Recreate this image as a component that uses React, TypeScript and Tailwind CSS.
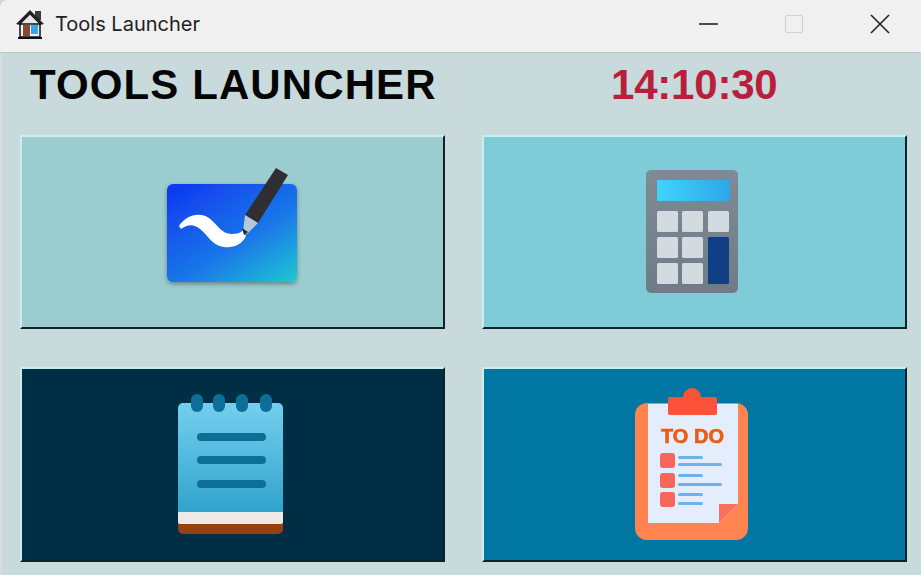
import React from "react";

function HomeIcon() {
  return (
    <svg width="30" height="29" viewBox="0 3 30 29" className="blur-[0.3px]">
      <path d="M20 4h6v9h-6z" fill="#3a3a3a" />
      <path d="M15 3 L1 17 L5 18 L15 8 L25 18 L29 17 Z" fill="#222" />
      <path d="M15 8 L5 18 L25 18 Z" fill="#e8e6ea" />
      <path d="M5 17 h20 v13 h-20 z" fill="#eef0f4" stroke="#111" strokeWidth="1.5" />
      <path d="M8 18h7v11H8z" fill="#8a4a36" />
      <path d="M16 18h7v9h-7z" fill="#35a4f0" />
      <path d="M3 30h24v2H3z" fill="#111" />
    </svg>
  );
}

function BoardIcon() {
  return (
    <svg width="143" height="136" viewBox="0 0 143 136" className="blur-[0.7px]">
      <defs>
        <linearGradient id="wb" x1="0.1" y1="0" x2="0.95" y2="1">
          <stop offset="0" stopColor="#0f3af0" />
          <stop offset="0.6" stopColor="#1a7ae8" />
          <stop offset="1" stopColor="#20c4d4" />
        </linearGradient>
        <filter id="sh" x="-10%" y="-10%" width="120%" height="125%">
          <feDropShadow dx="0" dy="2" stdDeviation="2" floodColor="#000" floodOpacity="0.35" />
        </filter>
      </defs>
      <rect x="6" y="20" width="130" height="98" rx="6" fill="url(#wb)" filter="url(#sh)" />
      <path
        d="M18 62 C 24 52, 38 47, 48 54 C 57 61, 61 70, 70 70 C 76 70, 80 69, 82 66 L 85 72 C 81 81, 72 84, 63 83 C 50 81, 47 71, 39 65 C 32 59, 26 61, 20 65 Z"
        fill="#fff"
      />
      <path d="M84 51 L115 4 L127 11 L97 59 Z" fill="#2f2f33" />
      <path d="M84 51 L97 59 L86 70 L82 68 Z" fill="#b8c8d4" />
      <path d="M81 64 L87 68 L83 71 Z" fill="#1d2a44" />
    </svg>
  );
}

function CalcIcon() {
  const keys = [
    [11, 41], [36, 41], [62, 41],
    [11, 67], [36, 67],
    [11, 93], [36, 93],
  ];
  return (
    <svg width="97" height="124" viewBox="0 0 97 124" className="blur-[0.7px]">
      <defs>
        <linearGradient id="cb" x1="0" y1="0" x2="0" y2="1">
          <stop offset="0" stopColor="#7f8a94" />
          <stop offset="1" stopColor="#6f7c88" />
        </linearGradient>
        <linearGradient id="cd" x1="0" y1="0" x2="1" y2="0">
          <stop offset="0" stopColor="#3fd4fb" />
          <stop offset="1" stopColor="#2ea6e6" />
        </linearGradient>
      </defs>
      <rect x="0" y="0" width="92" height="123" rx="5" fill="url(#cb)" />
      <rect x="11" y="10" width="73" height="21" fill="url(#cd)" />
      {keys.map(([x, y], i) => (
        <rect key={i} x={x} y={y} width="21" height="21" rx="1.5" fill="#d3dbe1" />
      ))}
      <rect x="62" y="67" width="21" height="47" rx="1.5" fill="#113f86" />
    </svg>
  );
}

function NoteIcon() {
  return (
    <svg width="109" height="141" viewBox="0 0 109 141" className="blur-[0.7px]">
      <defs>
        <linearGradient id="np" x1="0" y1="0" x2="0" y2="1">
          <stop offset="0" stopColor="#74cfee" />
          <stop offset="1" stopColor="#30a4cc" />
        </linearGradient>
      </defs>
      <path d="M0 124h105v11a5 5 0 0 1-5 5H5a5 5 0 0 1-5-5z" fill="#92410f" />
      <rect x="0" y="114" width="105" height="16" rx="2" fill="#ece9e6" />
      <path d="M5 9h95a5 5 0 0 1 5 5v104H0V14a5 5 0 0 1 5-5z" fill="url(#np)" />
      {[19, 41, 64, 88].map((x) => (
        <rect key={x} x={x - 6} y="0" width="12" height="18" rx="6" fill="#0d6f98" />
      ))}
      {[43, 66, 90].map((y) => (
        <rect key={y} x="19" y={y - 4} width="69" height="8" rx="4" fill="#0d6f98" />
      ))}
    </svg>
  );
}

function TodoIcon() {
  return (
    <svg width="119" height="154" viewBox="0 0 119 154" className="blur-[0.7px]">
      <rect x="0" y="15" width="113" height="137" rx="12" fill="#ff8450" />
      <path d="M13 16h90v100L84 135H13z" fill="#e4edfb" />
      <path d="M84 116h19L84 135z" fill="#f8705a" />
      <path d="M35 9h13a9 9 0 0 1 18 0h14a2 2 0 0 1 2 2v14a2 2 0 0 1-2 2H35a2 2 0 0 1-2-2V11a2 2 0 0 1 2-2z" fill="#fb5238" />
      <text
        x="57.5"
        y="55"
        textAnchor="middle"
        fontFamily="Liberation Sans, sans-serif"
        fontWeight="700"
        fontSize="20"
        fill="#ee5a10"
        stroke="#ee5a10"
        strokeWidth="0.6"
      >
        TO DO
      </text>
      {[65, 85, 104].map((y) => (
        <rect key={y} x="25" y={y} width="15" height="15" rx="3" fill="#f8655a" />
      ))}
      {[
        [43, 68, 25],
        [43, 75, 44],
        [43, 86, 25],
        [43, 95, 44],
        [43, 105, 25],
        [43, 114, 25],
      ].map(([x, y, w], i) => (
        <rect key={i} x={x} y={y} width={w} height="3" rx="1.5" fill="#6cb2ec" />
      ))}
    </svg>
  );
}

function Tile({ className, children }: { className: string; children: React.ReactNode }) {
  return (
    <div
      className={`flex items-center justify-center border-2 border-t-[#c9eef0] border-l-[#c9eef0] border-r-[#10212c] border-b-[#10212c] ${className}`}
    >
      {children}
    </div>
  );
}

export default function App() {
  return (
    <div className="flex h-[575px] w-[921px] flex-col overflow-hidden bg-[#c8dadc] font-['Liberation_Sans',Arial,sans-serif]">
      <div className="flex h-[53px] shrink-0 items-center rounded-tl-lg border-b border-[#b8c6c4] bg-[#f0f0f0] pb-[4px] pl-[15px]">
        <HomeIcon />
        <span className="ml-[10px] font-['Inter','Open_Sans',sans-serif] text-[20px] text-[#222]">Tools Launcher</span>
        <div className="ml-auto flex items-center">
          <svg width="20" height="20" viewBox="0 0 20 20" className="mr-[66px]">
            <path d="M0 10h19" stroke="#222" strokeWidth="1.6" />
          </svg>
          <div className="mr-[67px] h-[18px] w-[18px] rounded-[2px] border border-[#cfcfcf]" />
          <svg width="20" height="20" viewBox="0 0 20 20" className="mr-[31px]">
            <path d="M1 1l18 18M19 1L1 19" stroke="#222" strokeWidth="1.6" />
          </svg>
        </div>
      </div>
      <div className="flex min-h-0 flex-1 flex-col border-l-2 border-[#d8dcdc] pr-[14px] pl-[18px]">
        <div className="flex h-[82px] shrink-0 items-start pt-[8px] text-[42px] leading-[48px] font-bold">
          <h1 className="ml-[10px] w-[581px] tracking-[1.1px] text-[#050505]">TOOLS LAUNCHER</h1>
          <span className="tracking-[-0.2px] text-[#b91f3c]">14:10:30</span>
        </div>
        <div className="grid grid-cols-2 grid-rows-[194px_195px] gap-x-[37px] gap-y-[38px]">
          <Tile className="bg-[#9accd0]">
            <BoardIcon />
          </Tile>
          <Tile className="bg-[#7eccd8]">
            <CalcIcon />
          </Tile>
          <Tile className="bg-[#002f45]">
            <NoteIcon />
          </Tile>
          <Tile className="bg-[#0077a3]">
            <TodoIcon />
          </Tile>
        </div>
      </div>
    </div>
  );
}
